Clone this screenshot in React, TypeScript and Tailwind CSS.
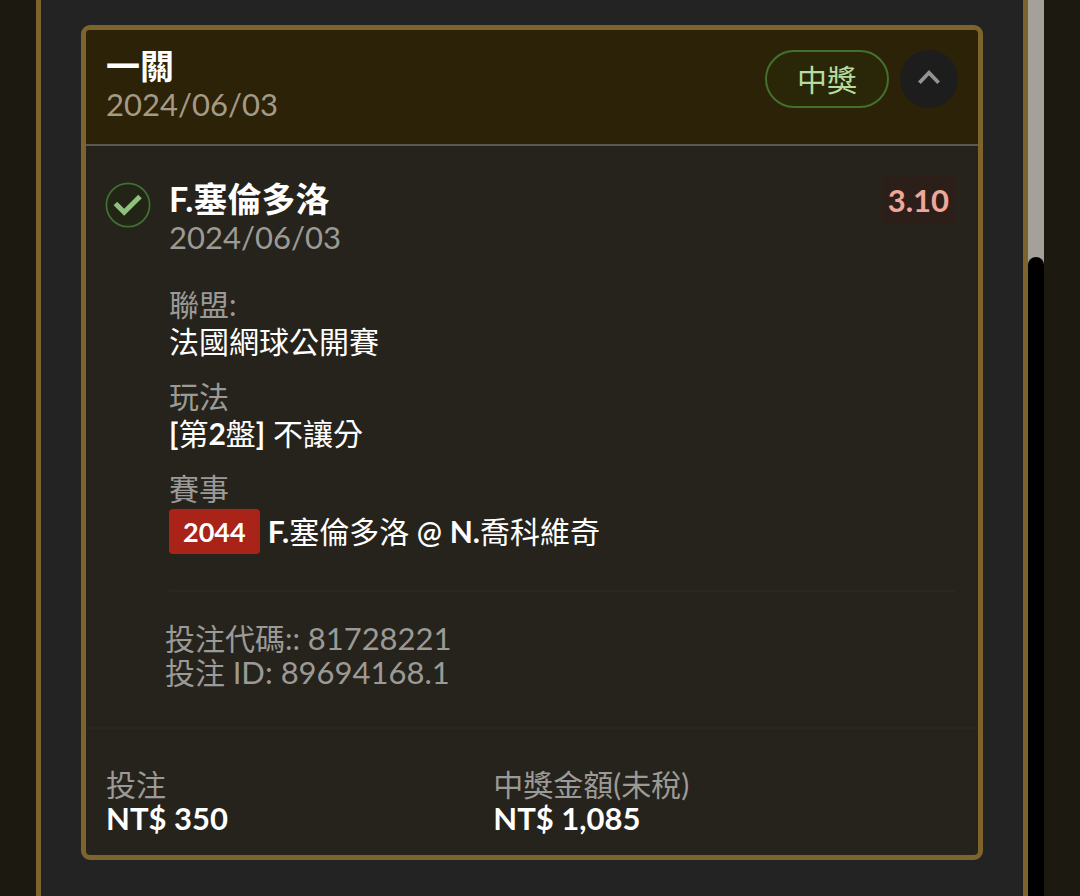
import type { ReactNode } from "react";

function Latin({ children }: { children: ReactNode }) {
  return <span className="font-bold">{children}</span>;
}

function Field({ label, children }: { label: string; children: ReactNode }) {
  return (
    <div className="text-[30px] leading-[37px]">
      <dt className="text-[#9b9a96]">{label}</dt>
      <dd className="text-white">{children}</dd>
    </div>
  );
}

function CheckBadge() {
  return (
    <svg viewBox="0 0 46 46" className="h-[46px] w-[46px] shrink-0" role="img" aria-label="中獎">
      <circle cx="23" cy="23" r="21.6" fill="#222516" stroke="#416f33" strokeWidth="1.8" />
      <path d="M10.4 21.4 L19.2 30.2 L35 14.4" fill="none" stroke="#8fc07c" strokeWidth="5" />
    </svg>
  );
}

function BetCard() {
  return (
    <article className="overflow-hidden rounded-[9px] border-[5px] border-[#7d642c] bg-[#26231d]">
      <header className="flex items-start justify-between border-b-2 border-[#5c594c] bg-[#2c2208] px-5 pt-[17px] pb-[21px]">
        <div className="leading-[38px]">
          <h2 className="text-[34px] font-bold text-white">一關</h2>
          <p className="text-[31px] text-[#a39a87]">2024/06/03</p>
        </div>
        <div className="flex items-center gap-[11px] pt-[3px]">
          <span className="flex h-[58px] items-center rounded-full border-2 border-[#41702f] bg-[#2a2608] px-[30px] text-[30px] text-[#b5dd9f]">
            中獎
          </span>
          <button
            type="button"
            aria-label="收合"
            className="flex h-[58px] w-[58px] items-center justify-center rounded-full bg-[#1d1d1d]"
          >
            <svg viewBox="0 0 24 16" className="mb-1 h-4 w-6">
              <path d="M2.4 13.8 L12 3.8 L21.6 13.8" fill="none" stroke="#96938f" strokeWidth="3.8" />
            </svg>
          </button>
        </div>
      </header>

      <section className="flex gap-[18px] pt-[30px] pr-[23px] pl-[19px]">
        <div className="pt-[6px]">
          <CheckBadge />
        </div>
        <div className="grow">
          <div className="flex items-start justify-between">
            <div className="pt-1 leading-[38px]">
              <h3 className="text-[34px] font-bold text-white">F.塞倫多洛</h3>
              <p className="text-[31px] text-[#9b9a96]">2024/06/03</p>
            </div>
            <strong className="rounded-sm bg-[#2c1f19] px-[6px] text-[31px] leading-[48px] font-bold text-[#efa799]">
              3.10
            </strong>
          </div>

          <dl className="flex flex-col gap-[18px] pt-[30px]">
            <Field label="聯盟:">法國網球公開賽</Field>
            <Field label="玩法">
              <Latin>[</Latin>第<Latin>2</Latin>盤<Latin>]</Latin> 不讓分
            </Field>
            <Field label="賽事">
              <span className="mt-[2px] flex items-center gap-2">
                <span className="rounded-[4px] bg-[#a92318] px-[14px] text-[27px] leading-[45px] font-bold">2044</span>
                <span>
                  <Latin>F.</Latin>塞倫多洛 <span className="font-semibold">@</span> <Latin>N.</Latin>喬科維奇
                </span>
              </span>
            </Field>
          </dl>
          <hr className="mt-9 border-t-2 border-[#2a2721]" />
        </div>
      </section>

      <section className="pt-[29px] pb-[38px] pl-[79px] text-[30px] leading-[34px] text-[#9b9a96]">
        <p>
          投注代碼:: <span className="text-[31px]">81728221</span>
        </p>
        <p>
          投注 <span className="text-[31px]">ID: 89694168.1</span>
        </p>
      </section>

      <footer className="border-t-2 border-[#2a2721] px-5 pt-[38px] pb-5">
        <dl className="grid grid-cols-[5fr_6fr] leading-[34px]">
          <div>
            <dt className="text-[30px] text-[#9b9a96]">投注</dt>
            <dd className="text-[31px] font-bold text-white">NT$ 350</dd>
          </div>
          <div>
            <dt className="text-[30px] text-[#9b9a96]">中獎金額(未稅)</dt>
            <dd className="text-[31px] font-bold text-white">NT$ 1,085</dd>
          </div>
        </dl>
      </footer>
    </article>
  );
}

export default function App() {
  return (
    <div className="flex min-h-screen bg-[#1c1911] px-9 font-['Lato','Noto_Sans_CJK_TC',sans-serif]">
      <main className="grow border-x-[5px] border-[#7d642c] bg-[#232323] px-10 pt-[25px] pb-9">
        <BetCard />
      </main>
      <div className="flex w-4 shrink-0 flex-col bg-[#a3a199]" aria-hidden="true">
        <div className="mt-[257px] grow rounded-t-full bg-black" />
      </div>
    </div>
  );
}
